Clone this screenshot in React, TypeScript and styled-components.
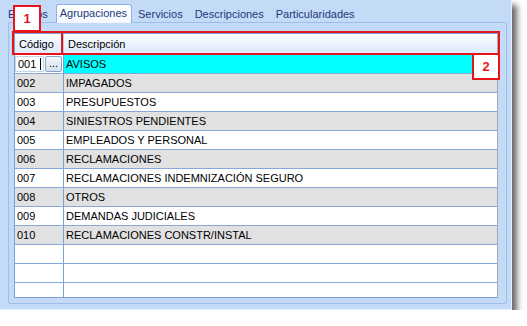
import styled, { createGlobalStyle } from 'styled-components';

const GlobalStyle = createGlobalStyle`
  body {
    margin: 0;
    background: #ffffff;
    font-family: 'Liberation Sans', Arial, sans-serif;
  }
`;

const Window = styled.div`
  position: relative;
  width: 512px;
  height: 310px;
  box-sizing: border-box;
  background: #c4dbf8;
  border-right: 1px solid #e6f1ff;
  border-bottom: 1px solid #e6f1ff;
  box-shadow: 5px 5px 6px rgba(0, 0, 0, 0.6);
  display: flex;
  flex-direction: column;
`;

const TabStrip = styled.div`
  height: 22px;
  display: flex;
  align-items: flex-end;
  padding-left: 2px;
`;

const Tab = styled.div<{ $active?: boolean; $trail?: number }>`
  height: ${({ $active }) => ($active ? '19px' : '17px')};
  box-sizing: border-box;
  padding: ${({ $active, $trail = 5 }) => ($active ? '0 4px 2px 3px' : `0 ${$trail}px 0 5px`)};
  margin-bottom: ${({ $active }) => ($active ? '-1px' : '0')};
  display: flex;
  align-items: center;
  font-size: 11px;
  color: #1c3a78;
  white-space: nowrap;
  position: relative;
  z-index: ${({ $active }) => ($active ? 1 : 0)};
  background: ${({ $active }) =>
    $active ? 'linear-gradient(#ffffff, #f4f8fe)' : 'transparent'};
  border: 1px solid ${({ $active }) => ($active ? '#8fb2e4' : 'transparent')};
  border-bottom: none;
  border-radius: 3px 3px 0 0;
`;

const Panel = styled.div`
  flex: 1;
  margin: 0 4px 5px 8px;
  border: 1px solid #9ebde8;
  border-radius: 2px;
  padding: 10px 8px 0 5px;
  box-sizing: border-box;
`;

const Grid = styled.div`
  border: 1px solid #7f9fd2;
  border-right-color: #a9a9a9;
  background: #ffffff;
  height: 265px;
  box-sizing: border-box;
  overflow: hidden;
`;

const HeaderRow = styled.div`
  display: grid;
  grid-template-columns: 49px 1fr;
  height: 21px;
  background: linear-gradient(#fcfdff, #dce8fb);
  border-bottom: 1px solid #8eaede;
  box-sizing: border-box;
`;

const HeaderCell = styled.div<{ $first?: boolean }>`
  display: flex;
  align-items: center;
  padding-left: 4px;
  font-size: 11px;
  color: #000;
  border-right: ${({ $first }) => ($first ? '1px solid #b5c9e8' : 'none')};
`;

const Row = styled.div<{ $shade: string }>`
  display: grid;
  grid-template-columns: 49px 1fr;
  height: 19px;
  flex-shrink: 0;
  box-sizing: border-box;
  border-bottom: 1px solid #86a8dc;
  background: ${({ $shade }) => $shade};
`;

const Cell = styled.div<{ $first?: boolean; $fill?: string }>`
  display: flex;
  align-items: center;
  padding-left: 2px;
  font-size: 11px;
  color: #000;
  white-space: nowrap;
  overflow: hidden;
  background: ${({ $fill }) => $fill || 'transparent'};
  border-right: ${({ $first }) => ($first ? '1px solid #7f9fd2' : 'none')};
`;

const EditCell = styled.div`
  display: flex;
  align-items: stretch;
  background: #ffffff;
  border-right: 1px solid #7f9fd2;
  padding: 1px 1px 1px 0;
`;

const EditBox = styled.div`
  flex: 1;
  display: flex;
  align-items: center;
  padding-left: 2px;
  font-size: 11px;
  color: #000;
  border: 1px solid #c3d3ea;
`;

const Caret = styled.span`
  width: 1px;
  height: 12px;
  background: #000;
  margin-left: 4px;
`;

const DotsButton = styled.div`
  width: 17px;
  box-sizing: border-box;
  margin-left: 1px;
  border: 1px solid #8aa4c8;
  border-radius: 2px;
  background: linear-gradient(#f3f6fb, #d6e0ee);
  font-size: 11px;
  line-height: 1;
  display: flex;
  align-items: flex-end;
  justify-content: center;
  padding-bottom: 2px;
  color: #000;
`;

const Badge = styled.div<{ $left: number; $top: number }>`
  position: absolute;
  left: ${({ $left }) => $left}px;
  top: ${({ $top }) => $top}px;
  width: 28px;
  height: 27px;
  box-sizing: border-box;
  border: 2px solid #e8141b;
  background: #ffffff;
  color: #e8141b;
  font-weight: bold;
  font-size: 13px;
  display: flex;
  align-items: center;
  justify-content: center;
  z-index: 3;
`;

const HeaderMark = styled.div`
  position: absolute;
  left: 12px;
  top: 31px;
  width: 488px;
  height: 24px;
  box-sizing: border-box;
  border: 2px solid #e8141b;
  z-index: 2;
  pointer-events: none;
`;

const CodeMark = styled.div`
  width: 49px;
  height: 100%;
  box-sizing: border-box;
  border-right: 2px solid #e8141b;
`;

const rows = [
  ['002', 'IMPAGADOS'],
  ['003', 'PRESUPUESTOS'],
  ['004', 'SINIESTROS PENDIENTES'],
  ['005', 'EMPLEADOS Y PERSONAL'],
  ['006', 'RECLAMACIONES'],
  ['007', 'RECLAMACIONES INDEMNIZACIÓN SEGURO'],
  ['008', 'OTROS'],
  ['009', 'DEMANDAS JUDICIALES'],
  ['010', 'RECLAMACIONES CONSTR/INSTAL'],
  ['', ''],
  ['', ''],
  ['', ''],
];

const App = () => (
  <>
    <GlobalStyle />
    <Window>
      <TabStrip>
        <Tab $trail={7}>Estados</Tab>
        <Tab $active>Agrupaciones</Tab>
        <Tab>Servicios</Tab>
        <Tab>Descripciones</Tab>
        <Tab>Particularidades</Tab>
      </TabStrip>
      <Panel>
        <Grid>
          <HeaderRow>
            <HeaderCell $first>Código</HeaderCell>
            <HeaderCell>Descripción</HeaderCell>
          </HeaderRow>
          <Row $shade="#ffffff">
            <EditCell>
              <EditBox>
                001<Caret />
              </EditBox>
              <DotsButton>...</DotsButton>
            </EditCell>
            <Cell $fill="#00ffff">AVISOS</Cell>
          </Row>
          {rows.map(([code, desc], i) => (
            <Row key={i} $shade={i % 2 === 0 && code ? '#e1e1e1' : '#ffffff'}>
              <Cell $first>{code}</Cell>
              <Cell>{desc}</Cell>
            </Row>
          ))}
        </Grid>
      </Panel>
      <Badge $left={13} $top={5}>1</Badge>
      <HeaderMark>
        <CodeMark />
      </HeaderMark>
      <Badge $left={472} $top={53}>2</Badge>
    </Window>
  </>
);

export default App;
